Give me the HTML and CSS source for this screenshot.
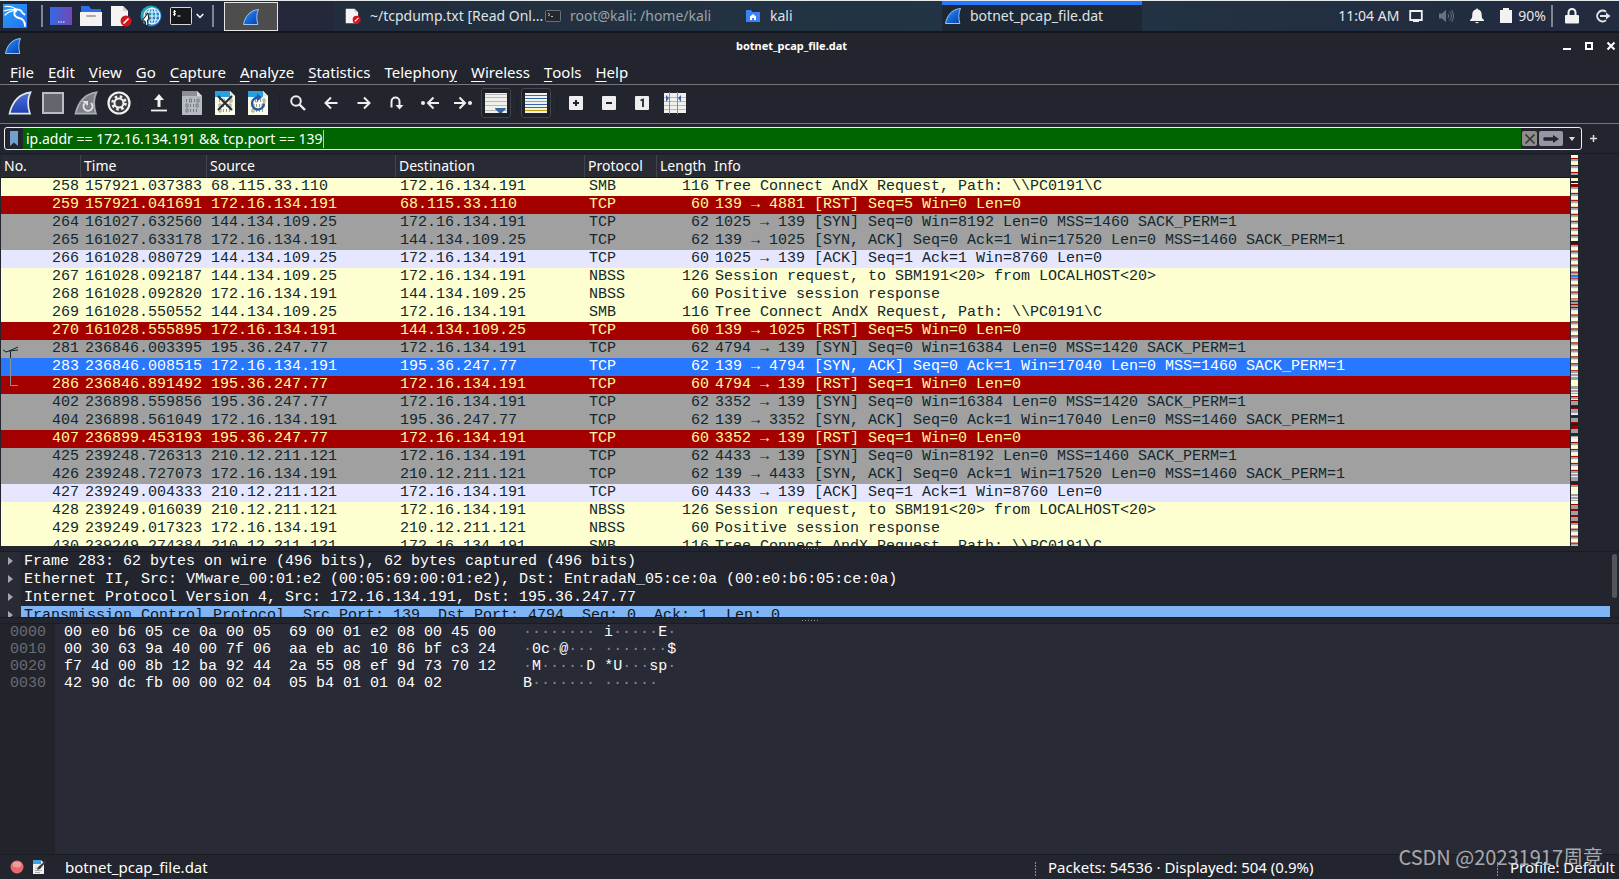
FILE: index.html
```html
<!DOCTYPE html>
<html lang="en">
<head>
<meta charset="utf-8">
<title>botnet_pcap_file.dat</title>
<link rel="stylesheet" href="styles.css">
</head>
<body>
<svg class="defs" width="0" height="0" aria-hidden="true">
  <defs>
    <linearGradient id="fin-blue" x1="0" y1="0" x2="1" y2="1"><stop offset="0" stop-color="#4da3ff"/><stop offset=".5" stop-color="#1368d8"/><stop offset="1" stop-color="#0a3fa8"/></linearGradient>
    <linearGradient id="fin-deep" x1="0" y1="0" x2="0" y2="1"><stop offset="0" stop-color="#4b74dd"/><stop offset="1" stop-color="#1f3fb4"/></linearGradient>
    <linearGradient id="kali-bg" x1="0" y1="0" x2="1" y2="1"><stop offset="0" stop-color="#2aa0f5"/><stop offset="1" stop-color="#2272f2"/></linearGradient>
    <linearGradient id="desk" x1="0" y1="0" x2="1" y2="0"><stop offset="0" stop-color="#3569e0"/><stop offset="1" stop-color="#7048b8"/></linearGradient>
    <linearGradient id="globe-bg" x1="0" y1="0" x2="1" y2="1"><stop offset="0" stop-color="#28b7b0"/><stop offset="1" stop-color="#2265d8"/></linearGradient>
    <symbol id="fin" viewBox="0 0 16 16"><path d="M.5 15.5C2 8 6 1.500 15.500.5c-2 4-2.300 9-.7 15z" fill="url(#fin-blue)" stroke="#9cc4f4" stroke-width="1"/></symbol>
    <symbol id="doc-no" viewBox="0 0 22 22"><path d="M1 1h12l5 5v15H1z" fill="#f6f4f2"/><path d="M13 1l5 5h-5z" fill="#d2d0ce"/><circle cx="16" cy="16" r="5.500" fill="#d3141d"/><path d="M13.500 18.500l5-5" stroke="#fff" stroke-width="1.600"/></symbol>
    <symbol id="bits" viewBox="0 0 20 24"><path d="M4.500 8v3M7.500 8h2v3h-2zM12.500 8v3M15 8h2v3h-2zM4 13h2v3H4zM8.500 13v3M11.500 13v3M14 13h2v3h-2zM4 18h2v3H4zM8.500 18v3M11.500 18v3M14.500 18v3" fill="none" stroke="currentColor" stroke-width="1"/></symbol>
  </defs>
</svg>

<header class="panel">
  <div class="launchers">
    <button class="launch" aria-label="Applications"><svg width="24" height="24" viewBox="0 0 24 24"><rect width="24" height="24" fill="url(#kali-bg)"/><g fill="none" stroke="#fff" stroke-linecap="round"><path d="M2 2.500c5-.5 9 .5 12 3.500M1 7c5-2 9-2 13-1M2 11c3-3 7-4.500 11-4" stroke-width="1.200"/><path d="M12 5.500c3-.5 6 0 7.500 3.500l2 1.500M13 7c-3 2-2 6 3 7s6 4 6 8" stroke-width="1.800"/></g></svg></button>
    <span class="bar"></span>
    <button class="launch" aria-label="Show desktop"><svg width="22" height="18" viewBox="0 0 22 18"><rect width="22" height="18" fill="url(#desk)"/><path d="M8 15h1.500M10.500 15H12M13 15h1.500" stroke="#fff" stroke-width="1.200"/></svg></button>
    <button class="launch" aria-label="Files"><svg width="22" height="20" viewBox="0 0 22 20"><path d="M1 0h8l2 3h10v6H1z" fill="#2b6fe6"/><path d="M0 6h22v14H0z" fill="#f3f2f1"/><rect x="6" y="9" width="10" height="2" rx="1" fill="#aaa"/></svg></button>
    <button class="launch" aria-label="Text editor"><svg width="22" height="22"><use href="#doc-no"/></svg></button>
    <button class="launch" aria-label="Web browser"><svg width="22" height="22" viewBox="0 0 22 22"><circle cx="11" cy="11" r="10.500" fill="url(#globe-bg)"/><g fill="none" stroke="#e9f6ff" stroke-width="1.200"><circle cx="12" cy="11" r="8"/><ellipse cx="12" cy="11" rx="4" ry="8"/><path d="M4 11h16M12 3v16M5.500 7h13M5.500 15h13"/></g><path d="M8 8L2 16l3 0 1 5 2-1-.5-5L9 15z" fill="#fff" stroke="#111" stroke-width="1"/></svg></button>
    <button class="launch" aria-label="Terminal"><svg width="22" height="18" viewBox="0 0 22 18"><rect x=".5" y=".5" width="21" height="17" rx="1" fill="#15171a" stroke="#d8d8d8"/><path d="M6 4.500c-3-1-3 1.500-1.500 1.500s2 2.500-1.500 1.500M4.500 3v6M7.500 9h3" fill="none" stroke="#fff" stroke-width="1"/></svg></button>
    <button class="launch drop" aria-label="More terminals"><svg width="8" height="6" viewBox="0 0 8 6"><path d="M.7 1L4 4.500 7.300 1" fill="none" stroke="#fff" stroke-width="1.500"/></svg></button>
    <span class="bar"></span>
  </div>
  <button class="workspace" aria-label="Workspace 1"><svg width="16" height="16"><use href="#fin"/></svg></button>
  <nav class="tasks">
    <button class="task"><svg width="16" height="16"><use href="#doc-no"/></svg><span>~/tcpdump.txt [Read Onl...</span></button>
    <button class="task dim"><svg width="16" height="12" viewBox="0 0 16 12"><rect x=".5" y=".5" width="15" height="11" rx="1" fill="#24282d" stroke="#667078"/><path d="M3 3l2 1.500L3 6M6 6.500h2" fill="none" stroke="#b6bdc2"/></svg><span>root@kali: /home/kali</span></button>
    <button class="task"><svg width="16" height="12" viewBox="0 0 16 12"><path d="M1 0h5l1.500 2H15v10H1z" fill="#3d82f7"/><path d="M8 4l3 2.500V10H9V8H7v2H5V6.500z" fill="#fff"/></svg><span>kali</span></button>
    <button class="task current"><svg width="16" height="16"><use href="#fin"/></svg><span>botnet_pcap_file.dat</span></button>
  </nav>
  <div class="tray">
    <span class="clock">11:04 AM</span>
    <svg class="t1" width="14" height="14" viewBox="0 0 14 14"><path d="M1.200 2h11.600v9H1.200z" fill="none" stroke="#f2f2f2" stroke-width="1.800"/><path d="M4 11h6v2H4z" fill="#f2f2f2"/></svg>
    <svg class="t2" width="15" height="14" viewBox="0 0 15 14"><path d="M0 4.500h3L7 1v12L3 9.500H0z" fill="#6b7280"/><path d="M9 5q1.500 2 0 4M10.500 2.500q4 4.500 0 9M12.500 1q4 6 0 12" fill="none" stroke="#6b7280" stroke-width="1"/></svg>
    <svg class="t2" width="14" height="16" viewBox="0 0 14 16"><path d="M7 0l1 1.500c3 .7 3.700 3 3.700 5.500 0 3 .8 4 2.300 5v1H0v-1c1.500-1 2.300-2 2.300-5 0-2.500.7-4.800 3.700-5.500zM5 14h4q-2 2.500-4 0z" fill="#f2f2f2"/></svg>
    <svg class="t2" width="12" height="16" viewBox="0 0 12 16"><path d="M3 0h6v2h3v13H0V2h3z" fill="#f2f2f2"/></svg>
    <span class="charge">90%</span>
    <span class="bar"></span>
    <svg class="t3" width="14" height="16" viewBox="0 0 14 16"><path d="M3.500 8V4.500a3.500 3.500 0 017 0V8" fill="none" stroke="#f2f2f2" stroke-width="2"/><rect y="7" width="14" height="8.500" rx="1" fill="#f2f2f2"/></svg>
    <svg class="t2" width="16" height="14" viewBox="0 0 16 14"><path d="M11 2.800A5.400 5.400 0 1011 11.200" fill="none" stroke="#e4e4e4" stroke-width="2"/><path d="M5 7h8" stroke="#e4e4e4" stroke-width="2"/><path d="M11 3.500L15.500 7 11 10.500z" fill="#e4e4e4"/></svg>
  </div>
</header>

<div class="titlebar">
  <svg width="16" height="16"><use href="#fin"/></svg>
  <h1>botnet_pcap_file.dat</h1>
  <div class="winbtns">
    <button aria-label="Minimize"><svg width="10" height="10" viewBox="0 0 10 10"><path d="M1 8h8" stroke="#fff" stroke-width="2"/></svg></button>
    <button aria-label="Maximize"><svg width="10" height="10" viewBox="0 0 10 10"><path d="M2 2h6v6H2z" fill="none" stroke="#fff" stroke-width="2"/></svg></button>
    <button aria-label="Close"><svg width="10" height="10" viewBox="0 0 10 10"><path d="M1.500 1.500l7 7M8.500 1.500l-7 7" stroke="#fff" stroke-width="2"/></svg></button>
  </div>
</div>

<nav class="menubar">
  <button><u>F</u>ile</button><button><u>E</u>dit</button><button><u>V</u>iew</button><button><u>G</u>o</button><button><u>C</u>apture</button><button><u>A</u>nalyze</button><button><u>S</u>tatistics</button><button>Telephon<u>y</u></button><button><u>W</u>ireless</button><button><u>T</u>ools</button><button><u>H</u>elp</button>
</nav>

<div class="toolbar">
  <button aria-label="Start capture"><svg width="24" height="24" viewBox="0 0 24 24"><path d="M1.500 22.700C4 12 9 3 22.500 1.300c-3 6-3 14-.5 21.400z" fill="url(#fin-deep)" stroke="#e6e6e6" stroke-width="1.700"/></svg></button>
  <button aria-label="Stop capture"><svg width="22" height="22" viewBox="0 0 22 22"><rect x="1" y="1" width="20" height="20" fill="#63666d" stroke="#b9bcc3" stroke-width="2"/></svg></button>
  <button aria-label="Restart capture"><svg width="24" height="24" viewBox="0 0 24 24"><path d="M1.500 22.700C4 12 9 3 22.500 1.300c-3 6-3 14-.5 21.400z" fill="#7d8087" stroke="#a9acb2" stroke-width="1.700"/><path d="M17 12a4.500 4.500 0 11-6.500.5" fill="none" stroke="#dfe1e5" stroke-width="2"/><path d="M8 10h6v5z" fill="#dfe1e5"/></svg></button>
  <button aria-label="Capture options"><svg width="24" height="24" viewBox="0 0 24 24"><circle cx="12" cy="12" r="10.500" fill="#3a3b3e" stroke="#f2f2f2" stroke-width="2.200"/><circle cx="12" cy="12" r="6.500" fill="none" stroke="#f2f2f2" stroke-width="2.500" stroke-dasharray="2.550 2.550"/><circle cx="12" cy="12" r="4.500" fill="#3a3b3e" stroke="#f2f2f2" stroke-width="2"/></svg></button>
  <span class="sep"></span>
  <button aria-label="Open file"><svg width="16" height="18" viewBox="0 0 16 18"><path d="M8 0l5 6H9.500v7h-3V6H3z" fill="#f2f2f2"/><path d="M0 16.500h16" stroke="#f2f2f2" stroke-width="1.800"/></svg></button>
  <button aria-label="Save file"><svg width="20" height="24" viewBox="0 0 20 24" color="#777b82"><path d="M0 0h15l5 5v19H0z" fill="#b7bac0"/><path d="M0 0h15v5H0z" fill="#8b8f96"/><path d="M15 0l5 5h-5z" fill="#d5d7db"/><use href="#bits"/></svg></button>
  <button aria-label="Close file"><svg width="20" height="24" viewBox="0 0 20 24" color="#9b9b90"><path d="M0 0h15l5 5v19H0z" fill="#fbfbe9"/><path d="M0 0h15v6H0z" fill="#27a0df"/><path d="M15 0l5 5h-5z" fill="#e6e6d8"/><use href="#bits"/><path d="M3 5l14 14M17 5L3 19" stroke="#2b3034" stroke-width="2.200"/></svg></button>
  <button aria-label="Reload file"><svg width="20" height="24" viewBox="0 0 20 24" color="#9b9b90"><path d="M0 0h15l5 5v19H0z" fill="#fbfbe9"/><path d="M0 0h15v6H0z" fill="#27a0df"/><path d="M15 0l5 5h-5z" fill="#e6e6d8"/><use href="#bits"/><path d="M10 6.500a6 6 0 106 6" fill="none" stroke="#2459a5" stroke-width="2.300"/><path d="M9 2.500v8l5-4z" fill="#2459a5"/></svg></button>
  <span class="sep"></span>
  <button aria-label="Find packet"><svg width="16" height="16" viewBox="0 0 16 16"><circle cx="6" cy="6" r="4.800" fill="none" stroke="#eee" stroke-width="2"/><path d="M9.500 9.500l5.500 5.500" stroke="#eee" stroke-width="2.400"/></svg></button>
  <button aria-label="Previous packet"><svg width="14" height="14" viewBox="0 0 14 14"><path d="M13.500 7H2M7 1.500L1.500 7 7 12.500" fill="none" stroke="#eee" stroke-width="2"/></svg></button>
  <button aria-label="Next packet"><svg width="14" height="14" viewBox="0 0 14 14"><path d="M.5 7H12M7 1.500L12.500 7 7 12.500" fill="none" stroke="#eee" stroke-width="2"/></svg></button>
  <button aria-label="Go to packet"><svg width="14" height="14" viewBox="0 0 14 14"><path d="M1.500 11.500V5.500a4 4 0 018 0V10" fill="none" stroke="#eee" stroke-width="2"/><path d="M5.500 9h8l-4 4.500z" fill="#eee"/></svg></button>
  <button aria-label="First packet"><svg width="18" height="14" viewBox="0 0 18 14"><circle cx="2" cy="7" r="2" fill="#eee"/><path d="M18 7H7M12.500 1.500L7 7l5.500 5.500" fill="none" stroke="#eee" stroke-width="2"/></svg></button>
  <button aria-label="Last packet"><svg width="18" height="14" viewBox="0 0 18 14"><circle cx="16" cy="7" r="2" fill="#eee"/><path d="M0 7h11M5.500 1.500L11 7l-5.500 5.500" fill="none" stroke="#eee" stroke-width="2"/></svg></button>
  <button class="on" aria-label="Auto scroll" aria-pressed="true"><svg width="22" height="20" viewBox="0 0 22 20"><rect width="22" height="20" fill="#f0f0ec"/><path d="M0 1.500h22M0 4.500h22M0 8.500h22M0 12.500h22M0 17.500h22" stroke="#b9b9b4"/><path d="M10 15h11c0 2-3 3-4 5h-3c-1-2-4-3-4-5z" fill="#3465a4"/></svg></button>
  <span class="sep"></span>
  <button class="on" aria-label="Colorize" aria-pressed="true"><svg width="22" height="20" viewBox="0 0 22 20"><rect width="22" height="20" fill="#f0f0ec"/><path d="M0 2.500h22" stroke="#ef2929"/><path d="M0 5.500h22M0 11.500h22" stroke="#3465a4"/><path d="M0 8.500h22" stroke="#73d216"/><path d="M0 14.500h22" stroke="#75507b"/><path d="M0 17.500h22" stroke="#c4a000"/></svg></button>
  <span class="sep"></span>
  <button aria-label="Zoom in"><svg width="14" height="14" viewBox="0 0 14 14"><rect width="14" height="14" rx="1" fill="#eee"/><path d="M4 7h6M7 4v6" stroke="#23252e" stroke-width="2"/></svg></button>
  <button aria-label="Zoom out"><svg width="14" height="14" viewBox="0 0 14 14"><rect width="14" height="14" rx="1" fill="#eee"/><path d="M4 7h6" stroke="#23252e" stroke-width="2"/></svg></button>
  <button aria-label="Normal size"><svg width="14" height="14" viewBox="0 0 14 14"><rect width="14" height="14" rx="1" fill="#eee"/><path d="M5.500 4.500L8 3.500V11" fill="none" stroke="#23252e" stroke-width="1.800"/></svg></button>
  <button aria-label="Resize columns"><svg width="22" height="22" viewBox="0 0 22 22"><rect y="1" width="22" height="20" fill="#f0f0ec"/><path d="M0 5.500h22M0 9.500h22M0 13.500h22M0 17.500h22" stroke="#b9b9b4"/><path d="M5.500 0v22M13.500 0v22" stroke="#888a85"/><path d="M2 3l3 3-3 4zM17 3l-3 3 3 4z" fill="#3465a4"/></svg></button>
</div>

<form class="filter">
  <div class="filterbox">
    <button type="button" class="mark" aria-label="Bookmarks"><svg width="8" height="15" viewBox="0 0 8 15"><path d="M0 0h8v15l-4-3.500L0 15z" fill="#729fcf"/></svg></button>
    <label class="field"><input type="text" aria-label="Display filter" value="ip.addr == 172.16.134.191 &amp;&amp; tcp.port == 139"><span class="caret"></span></label>
    <button type="button" class="chip x" aria-label="Clear filter"><svg width="12" height="12" viewBox="0 0 12 12"><path d="M1.500 1.500l9 9M10.500 1.500l-9 9" stroke="#30333a" stroke-width="1.600"/></svg></button>
    <button type="button" class="chip go" aria-label="Apply filter"><svg width="16" height="8" viewBox="0 0 16 8"><path d="M1 2.200h9V0l6 4-6 4V5.800H1q-1.500-1.800 0-3.600z" fill="#23252e"/></svg></button>
    <button type="button" class="mark" aria-label="Recent filters"><svg width="6" height="4" viewBox="0 0 6 4"><path d="M0 0h6L3 4z" fill="#ddd"/></svg></button>
  </div>
  <button type="button" class="add" aria-label="Add filter button"><svg width="7" height="7" viewBox="0 0 7 7"><path d="M0 3.500h7M3.500 0v7" stroke="#ddd" stroke-width="1.500"/></svg></button>
</form>

<main class="panes">
<section class="packets">
<table>
<colgroup><col class="c-no"><col class="c-time"><col class="c-addr"><col class="c-addr"><col class="c-proto"><col class="c-len"><col></colgroup>
<thead><tr><th>No.</th><th>Time</th><th>Source</th><th>Destination</th><th>Protocol</th><th>Length</th><th>Info</th></tr></thead>
<tbody>
<tr class="smb"><td>258</td><td>157921.037383</td><td>68.115.33.110</td><td>172.16.134.191</td><td>SMB</td><td>116</td><td>Tree Connect AndX Request, Path: \\PC0191\C</td></tr>
<tr class="rst"><td>259</td><td>157921.041691</td><td>172.16.134.191</td><td>68.115.33.110</td><td>TCP</td><td>60</td><td>139 → 4881 [RST] Seq=5 Win=0 Len=0</td></tr>
<tr class="syn"><td>264</td><td>161027.632560</td><td>144.134.109.25</td><td>172.16.134.191</td><td>TCP</td><td>62</td><td>1025 → 139 [SYN] Seq=0 Win=8192 Len=0 MSS=1460 SACK_PERM=1</td></tr>
<tr class="syn"><td>265</td><td>161027.633178</td><td>172.16.134.191</td><td>144.134.109.25</td><td>TCP</td><td>62</td><td>139 → 1025 [SYN, ACK] Seq=0 Ack=1 Win=17520 Len=0 MSS=1460 SACK_PERM=1</td></tr>
<tr class="ack"><td>266</td><td>161028.080729</td><td>144.134.109.25</td><td>172.16.134.191</td><td>TCP</td><td>60</td><td>1025 → 139 [ACK] Seq=1 Ack=1 Win=8760 Len=0</td></tr>
<tr class="smb"><td>267</td><td>161028.092187</td><td>144.134.109.25</td><td>172.16.134.191</td><td>NBSS</td><td>126</td><td>Session request, to SBM191&lt;20&gt; from LOCALHOST&lt;20&gt;</td></tr>
<tr class="smb"><td>268</td><td>161028.092820</td><td>172.16.134.191</td><td>144.134.109.25</td><td>NBSS</td><td>60</td><td>Positive session response</td></tr>
<tr class="smb"><td>269</td><td>161028.550552</td><td>144.134.109.25</td><td>172.16.134.191</td><td>SMB</td><td>116</td><td>Tree Connect AndX Request, Path: \\PC0191\C</td></tr>
<tr class="rst"><td>270</td><td>161028.555895</td><td>172.16.134.191</td><td>144.134.109.25</td><td>TCP</td><td>60</td><td>139 → 1025 [RST] Seq=5 Win=0 Len=0</td></tr>
<tr class="syn"><td><svg class="related" width="20" height="54" viewBox="0 0 20 54"><path d="M2 10l3 2 3-1 9-4M8 11l9-1M9.500 11v7" fill="none" stroke="#12272e"/><path d="M9.500 18v27.500H17" fill="none" stroke="#8c9291"/></svg>281</td><td>236846.003395</td><td>195.36.247.77</td><td>172.16.134.191</td><td>TCP</td><td>62</td><td>4794 → 139 [SYN] Seq=0 Win=16384 Len=0 MSS=1420 SACK_PERM=1</td></tr>
<tr class="sel"><td>283</td><td>236846.008515</td><td>172.16.134.191</td><td>195.36.247.77</td><td>TCP</td><td>62</td><td>139 → 4794 [SYN, ACK] Seq=0 Ack=1 Win=17040 Len=0 MSS=1460 SACK_PERM=1</td></tr>
<tr class="rst"><td>286</td><td>236846.891492</td><td>195.36.247.77</td><td>172.16.134.191</td><td>TCP</td><td>60</td><td>4794 → 139 [RST] Seq=1 Win=0 Len=0</td></tr>
<tr class="syn"><td>402</td><td>236898.559856</td><td>195.36.247.77</td><td>172.16.134.191</td><td>TCP</td><td>62</td><td>3352 → 139 [SYN] Seq=0 Win=16384 Len=0 MSS=1420 SACK_PERM=1</td></tr>
<tr class="syn"><td>404</td><td>236898.561049</td><td>172.16.134.191</td><td>195.36.247.77</td><td>TCP</td><td>62</td><td>139 → 3352 [SYN, ACK] Seq=0 Ack=1 Win=17040 Len=0 MSS=1460 SACK_PERM=1</td></tr>
<tr class="rst"><td>407</td><td>236899.453193</td><td>195.36.247.77</td><td>172.16.134.191</td><td>TCP</td><td>60</td><td>3352 → 139 [RST] Seq=1 Win=0 Len=0</td></tr>
<tr class="syn"><td>425</td><td>239248.726313</td><td>210.12.211.121</td><td>172.16.134.191</td><td>TCP</td><td>62</td><td>4433 → 139 [SYN] Seq=0 Win=8192 Len=0 MSS=1460 SACK_PERM=1</td></tr>
<tr class="syn"><td>426</td><td>239248.727073</td><td>172.16.134.191</td><td>210.12.211.121</td><td>TCP</td><td>62</td><td>139 → 4433 [SYN, ACK] Seq=0 Ack=1 Win=17520 Len=0 MSS=1460 SACK_PERM=1</td></tr>
<tr class="ack"><td>427</td><td>239249.004333</td><td>210.12.211.121</td><td>172.16.134.191</td><td>TCP</td><td>60</td><td>4433 → 139 [ACK] Seq=1 Ack=1 Win=8760 Len=0</td></tr>
<tr class="smb"><td>428</td><td>239249.016039</td><td>210.12.211.121</td><td>172.16.134.191</td><td>NBSS</td><td>126</td><td>Session request, to SBM191&lt;20&gt; from LOCALHOST&lt;20&gt;</td></tr>
<tr class="smb"><td>429</td><td>239249.017323</td><td>172.16.134.191</td><td>210.12.211.121</td><td>NBSS</td><td>60</td><td>Positive session response</td></tr>
<tr class="smb"><td>430</td><td>239249.274384</td><td>210.12.211.121</td><td>172.16.134.191</td><td>SMB</td><td>116</td><td>Tree Connect AndX Request, Path: \\PC0191\C</td></tr>
</tbody>
</table>
<svg class="minimap" viewBox="0 0 7 392" preserveAspectRatio="none" shape-rendering="crispEdges" aria-hidden="true">
  <defs><pattern id="flow" width="7" height="7" patternUnits="userSpaceOnUse"><rect width="7" height="7" fill="#feffd0"/><rect y="3" width="7" height="1" fill="#a40000"/><rect y="4" width="7" height="2" fill="#a0a0a0"/><rect y="6" width="7" height="1" fill="#e7e6ff"/></pattern></defs>
  <rect width="7" height="392" fill="#feffd0"/>
  <rect width="7" height="86" fill="url(#flow)"/>
  <g transform="translate(0 86)"><rect width="7" height="34" fill="url(#flow)"/></g>
  <g transform="translate(0 120)"><rect width="7" height="28" fill="url(#flow)"/></g>
  <g transform="translate(0 157)"><rect width="7" height="63" fill="url(#flow)"/></g>
  <g transform="translate(0 285)"><rect width="7" height="34" fill="url(#flow)"/></g>
  <g transform="translate(0 372)"><rect width="7" height="20" fill="url(#flow)"/></g>
  <path d="M0 145h7v11H0zM0 217h7v9H0zM0 232h7v8H0zM0 243h7v40H0zM0 317h7v16H0zM0 340h7v7H0zM0 351h7v20H0z" fill="#a0a0a0"/>
  <path d="M0 156h7v1H0zM0 219h7v1H0zM0 222h7v1H0zM0 235h7v1H0zM0 238h7v1H0zM0 245h7v1H0zM0 259h7v2H0zM0 283h7v2H0zM0 319h7v1H0zM0 322h7v1H0zM0 342h7v1H0zM0 345h7v1H0z" fill="#e7e6ff"/>
  <path d="M0 24h7v2H0zM0 28h7v1H0z" fill="#feffd0"/>
  <path d="M0 29h7v3H0zM0 89h7v1H0zM0 147h7v1H0zM0 150h7v1H0zM0 153h7v1H0zM0 242h7v1H0zM0 246h7v1H0zM0 251h7v4H0zM0 261h7v3H0zM0 268h7v7H0zM0 279h7v3H0zM0 327h7v4H0zM0 350h7v1H0zM0 355h7v2H0zM0 361h7v2H0zM0 367h7v2H0z" fill="#a40000"/>
  <path d="M0 20h7v3H0zM0 26h7v2H0zM0 30h7v1H0zM0 86h7v3H0zM0 252h7v2H0zM0 262h7v1H0zM0 269h7v3H0zM0 273h7v1H0zM0 280h7v1H0zM0 328h7v2H0z" fill="#12272e"/>
  <path d="M0 120h7v2H0z" fill="#2777ff"/>
</svg>
</section>
<div class="splitter"></div>
<section class="details">
  <ul>
    <li><span>Frame 283: 62 bytes on wire (496 bits), 62 bytes captured (496 bits)</span></li>
    <li><span>Ethernet II, Src: VMware_00:01:e2 (00:05:69:00:01:e2), Dst: EntradaN_05:ce:0a (00:e0:b6:05:ce:0a)</span></li>
    <li><span>Internet Protocol Version 4, Src: 172.16.134.191, Dst: 195.36.247.77</span></li>
    <li class="picked"><span>Transmission Control Protocol, Src Port: 139, Dst Port: 4794, Seq: 0, Ack: 1, Len: 0</span></li>
  </ul>
  <div class="scroll"><i></i></div>
</section>
<div class="splitter"></div>
<section class="bytes">
<pre class="offsets">0000
0010
0020
0030</pre>
<pre class="dump">00 e0 b6 05 ce 0a 00 05  69 00 01 e2 08 00 45 00
00 30 63 9a 40 00 7f 06  aa eb ac 10 86 bf c3 24
f7 4d 00 8b 12 ba 92 44  2a 55 08 ef 9d 73 70 12
42 90 dc fb 00 00 02 04  05 b4 01 01 04 02</pre>
<pre class="dump"><s>········ </s>i<s>·····</s>E<s>·</s>
<s>·</s>0c<s>·</s>@<s>··· ·······</s>$
<s>·</s>M<s>·····</s>D *U<s>···</s>sp<s>·</s>
B<s>······· ······</s></pre>
</section>
</main>

<footer class="status">
  <button aria-label="Expert info"><svg width="14" height="14" viewBox="0 0 14 14"><circle cx="7" cy="7" r="6.500" fill="#e8696b"/><ellipse cx="7" cy="4.500" rx="4.500" ry="3" fill="#f09a9a"/></svg></button>
  <button aria-label="Capture comment"><svg width="13" height="14" viewBox="0 0 13 14"><path d="M0 0h8l3 3v11H0z" fill="#f1f1e8"/><path d="M0 0h8v4H0z" fill="#3ba2dd"/><path d="M2 8h6M2 10.500h7M2 12.500h5" stroke="#aaa"/><path d="M4 10l1-3 7-6 1 1-6 7z" fill="#3a3d40"/></svg></button>
  <span class="file">botnet_pcap_file.dat</span>
  <span class="seg counts">Packets: 54536 · Displayed: 504 (0.9%)</span>
  <span class="seg profile">Profile: Default</span>
</footer>
<div class="watermark">CSDN @20231917周竞</div>
</body>
</html>
```
FILE: styles.css
```css
* { box-sizing: border-box; }

body {
  margin: 0;
  height: 100vh;
  display: flex;
  flex-direction: column;
  overflow: hidden;
  position: relative;
  background: #23252e;
  color: #fff;
  font: 14px/20px "Noto Sans", sans-serif;
}

button {
  display: flex;
  align-items: center;
  justify-content: center;
  margin: 0;
  padding: 0;
  border: 0;
  background: none;
  color: inherit;
  font: inherit;
}

svg { display: block; flex: none; }
.defs { position: absolute; }

.bar { width: 2px; height: 22px; background: #80858f; flex: none; }

/* desktop panel */
.panel {
  flex: none;
  display: flex;
  align-items: stretch;
  height: 33px;
  border-top: 1px solid #e4e9ea;
  border-bottom: 2px solid #14161c;
  background: linear-gradient(90deg, #20263a, #22303f 35%, #223545 60%, #222b3f 95%);
}
.launchers { display: flex; align-items: center; padding-left: 3px; width: 224px; }
.launchers .launch { margin-right: 8px; }
.launchers .launch:first-child { margin-right: 14px; }
.launchers .bar { margin-right: 7px; }
.launchers .drop { margin: 0 8px 0 -4px; }
.workspace { width: 54px; margin: 1px 0 0; border: 1px solid #e6e6e6; background: #4d4d4d; }
.tasks { display: flex; flex: 1; padding-left: 64px; background: linear-gradient(90deg, #24283a 56px, transparent 56px); }
.task {
  width: 200px;
  justify-content: flex-start;
  gap: 9px;
  padding-left: 3px;
  color: #dfe3e6;
  white-space: nowrap;
}
.task.dim { color: #9aa3a9; }
.task.current { background: #1e2835; box-shadow: inset 0 4px #2777ff; }
.tray { display: flex; align-items: center; padding-right: 8px; color: #e4e7ea; }
.t1 { margin-left: 10px; }
.t2 { margin-left: 16px; }
.t3 { margin-left: 12px; }
.charge { margin: 0 5px 0 6px; }

/* window chrome */
.titlebar { flex: none; display: flex; align-items: center; height: 26px; padding: 0 3px 0 5px; }
.titlebar h1 { flex: 1; margin: 0; font-size: 11px; line-height: 20px; font-weight: 700; text-align: center; }
.winbtns { display: flex; gap: 12px; }

.menubar { flex: none; display: flex; gap: 14px; height: 25px; padding-left: 10px; font-size: 15px; }
.menubar u { text-underline-offset: 3px; }

.toolbar {
  flex: none;
  display: flex;
  align-items: center;
  gap: 3px;
  height: 40px;
  padding: 0 0 2px 5px;
  border-top: 1px solid #74767c;
  border-bottom: 1px solid #74767c;
}
.toolbar button { width: 30px; height: 30px; border-radius: 3px; }
.toolbar .on { border: 1px solid #41444c; background: #1f2128; }
.toolbar .sep { width: 4px; height: 20px; border-right: 1px solid #1d1f26; }

.filter { flex: none; display: flex; align-items: center; gap: 8px; height: 29px; margin: 0; padding: 0 22px 0 4px; }
.filterbox { flex: 1; display: flex; align-items: center; height: 23px; border: 1px solid #f0f0f0; border-radius: 3px; }
.mark { width: 18px; }
.field { flex: 1; display: flex; align-items: center; height: 21px; padding-left: 3px; background: #006400; }
.field input {
  field-sizing: content;
  margin: 0;
  padding: 0;
  border: 0;
  outline: 0;
  background: none;
  color: #fff;
  font: inherit;
}
.caret { width: 1px; height: 18px; background: #f3a6f0; }
.chip { height: 15px; border-radius: 2px; }
.chip.x { width: 15px; margin: 0 2px 0 1px; background: #8d8e87; }
.chip.go { width: 24px; background: #9496a3; }

/* panes */
.panes { flex: 1; min-height: 0; display: flex; flex-direction: column; }
.packets { flex: 394 1 0; min-height: 0; overflow: hidden; display: flex; align-items: flex-start; padding: 1px 41px 0 1px; border-top: 1px solid #1a1c22; }
.packets table {
  flex: 1;
  min-width: 0;
  table-layout: fixed;
  border-collapse: separate;
  border-spacing: 0;
  font: 15px/18px "Liberation Mono", monospace;
}
.c-no { width: 80px; }
.c-time { width: 126px; }
.c-addr { width: 189px; }
.c-proto { width: 72px; }
.c-len { width: 54px; }
th {
  height: 23px;
  padding: 0 0 0 3px;
  border-right: 1px solid #41444c;
  border-bottom: 1px solid #14161c;
  background: #282b33;
  font: 14px/22px "Noto Sans", sans-serif;
  text-align: left;
}
th:last-child, th:nth-child(6) { border-right: 0; }
td { height: 18px; padding: 0 2px 0 4px; white-space: nowrap; }
td:first-child, td:nth-child(6) { text-align: right; }
td:first-child { position: relative; }
.related { position: absolute; left: 0; top: 0; z-index: 1; }
.smb { background: #feffd0; color: #12272e; }
.rst { background: #a40000; color: #fffc9c; }
.syn { background: #a0a0a0; color: #12272e; }
.ack { background: #e7e6ff; color: #12272e; }
.sel { background: #2777ff; color: #fff; }
.minimap { width: 7px; height: 100%; margin-left: 1px; }

.splitter { flex: none; height: 5px; background: repeating-linear-gradient(90deg, #8a8c92 0 1px, transparent 1px 3px) center / 16px 1px no-repeat; }

.details {
  flex: 66 1 0;
  min-height: 0;
  overflow: hidden;
  display: flex;
  border-top: 1px solid #1a1c22;
  border-bottom: 1px solid #1a1c22;
  font: 15px/16px "Liberation Mono", monospace;
}
.details ul { flex: 1; margin: 0; padding: 0; list-style: none; }
.details li { display: flex; align-items: center; background: linear-gradient(#282a34, #282a34) 0 0 / 21px 100% no-repeat; }
.details li::before { content: ""; margin: 0 8px 0 8px; border: 4px solid transparent; border-left: 5px solid #a4a6ab; border-right: 0; }
.details li span { flex: 1; padding: 2px 0 0 3px; }
.details .picked span { background: #7fb4f5; color: #101318; }
.scroll { width: 9px; padding: 2px 2px 9px; }
.scroll i { display: block; height: 44px; border-radius: 3px; background: #53555b; }

.bytes {
  flex: 232 1 0;
  min-height: 0;
  display: flex;
  border-top: 1px solid #1a1c22;
  border-bottom: 1px solid #1a1c22;
  background: #282a36;
}
.bytes pre { margin: 0; font: 15px/17px "Liberation Mono", monospace; }
.offsets { width: 55px; padding-left: 10px; background: #22242c; color: #6a6c72; }
.dump { padding-left: 9px; }
.dump + .dump { padding-left: 27px; }
.dump s { color: #85878d; text-decoration: none; }

.status { flex: none; display: flex; align-items: center; height: 24px; padding-left: 10px; font-size: 15px; }
.status button { margin-right: 9px; }
.file { flex: 1; padding-left: 10px; }
.seg { padding-left: 13px; background: repeating-linear-gradient(#8a8c92 0 2px, transparent 2px 3px) 0 5px / 1px 15px no-repeat; }
.counts { width: 462px; }
.profile { width: 122px; white-space: nowrap; }

.watermark {
  position: absolute;
  right: 16px;
  bottom: 8px;
  color: #c9cacc;
  opacity: .8;
  font: 20px/28px "Noto Sans CJK SC", sans-serif;
  white-space: nowrap;
}
```
